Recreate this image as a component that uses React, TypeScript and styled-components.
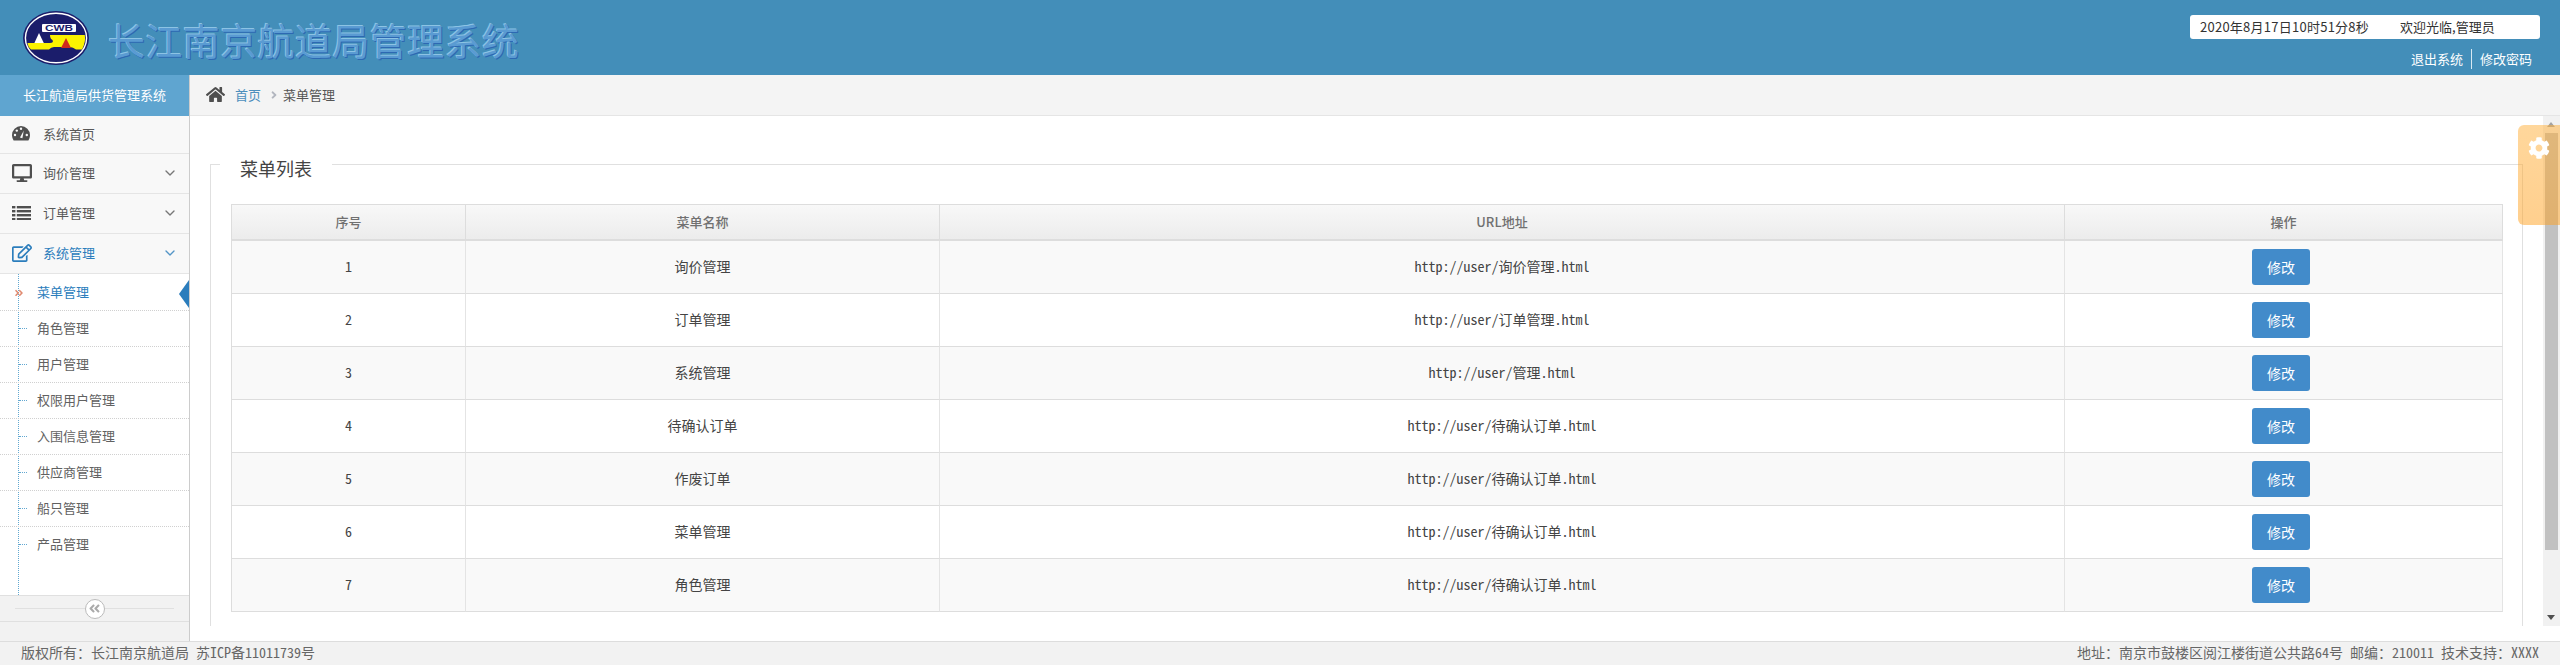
import * as React from 'react'
import styled, { createGlobalStyle } from 'styled-components'
import {
  FaAngleDoubleLeft,
  FaAngleDoubleRight,
  FaAngleRight,
  FaCog,
  FaDesktop,
  FaHome,
  FaRegEdit,
} from 'react-icons/fa'
import { ChevronDown } from 'lucide-react'

const sans = `"Noto Sans CJK SC", "Open Sans", sans-serif`
const song = `"Noto Sans Mono CJK SC", "Liberation Mono", "Noto Sans CJK SC", monospace`

const GlobalStyle = createGlobalStyle`
  html, body {
    margin: 0;
    height: 100%;
    overflow: hidden;
    background: #fff;
    font-family: ${sans};
    font-size: 13px;
  }
  * { box-sizing: border-box; }
`

const Page = styled.div`
  display: flex;
  flex-direction: column;
  height: 665px;
`

const Header = styled.header`
  flex: 0 0 75px;
  display: flex;
  justify-content: space-between;
  background: #438eb9;
  padding: 11px 20px 0 23px;
`

const BrandArea = styled.div`
  display: flex;
  align-items: flex-start;
  gap: 19px;
`

const SystemTitle = styled.h1`
  margin: 7px 0 0;
  font-size: 37px;
  line-height: 44px;
  font-weight: 400;
  letter-spacing: 0.4px;
  color: #5a9bd2;
  text-shadow: -1px -1px 0 #8cc3e4, 1px 1px 0 #2d68b2;
`

const HeaderRight = styled.div`
  display: flex;
  flex-direction: column;
  align-items: flex-end;
  padding-top: 4px;
`

const ClockBox = styled.div`
  display: flex;
  gap: 31px;
  width: 350px;
  height: 24px;
  padding-left: 10px;
  background: #fff;
  border-radius: 3px;
  color: #333;
  line-height: 24px;
`

const ClockDate = styled.span`
  letter-spacing: 0.25px;
`

const HeaderLinks = styled.div`
  display: flex;
  align-items: center;
  height: 20px;
  margin-top: 10px;
  padding-right: 8px;
  color: #fff;
`

const HeaderLink = styled.a<{ $divided?: boolean }>`
  line-height: 20px;
  padding-left: ${({ $divided }) => ($divided ? '8px' : '0')};
  margin-left: ${({ $divided }) => ($divided ? '8px' : '0')};
  border-left: ${({ $divided }) => ($divided ? '1px solid #d8e8f2' : 'none')};
`

const Body = styled.div`
  flex: 1;
  display: flex;
  min-height: 0;
`

const Sidebar = styled.aside`
  flex: 0 0 190px;
  display: flex;
  flex-direction: column;
  background: #f2f2f2;
  border-right: 1px solid #ccc;
`

const SideBrand = styled.div`
  flex: 0 0 41px;
  background: #5fa5d0;
  color: #fff;
  text-align: center;
  line-height: 39px;
`

const NavItem = styled.div<{ $active?: boolean; $height: number }>`
  flex: 0 0 ${({ $height }) => $height}px;
  display: flex;
  align-items: center;
  padding: 0 11px 2px 12px;
  background: #f8f8f8;
  border-bottom: 1px solid #e5e5e5;
  color: ${({ $active }) => ($active ? '#2b7dbc' : '#585858')};
`

const NavIcon = styled.span<{ $active?: boolean }>`
  flex: 0 0 31px;
  display: flex;
  align-items: center;
  font-size: 20px;
  color: ${({ $active }) => ($active ? '#2b7dbc' : '#4f4f4f')};
`

const NavLabel = styled.span`
  flex: 1;
`

const NavCaret = styled(ChevronDown)`
  width: 16px;
  height: 16px;
  stroke-width: 2;
  opacity: 0.8;
`

const SubList = styled.div`
  position: relative;
  flex: 1;
  padding-top: 1px;
  background: #fff;

  &::before {
    content: '';
    position: absolute;
    top: 0;
    bottom: 0;
    left: 18px;
    border-left: 1px dotted #62a8d1;
  }
`

const SubItem = styled.div<{ $active?: boolean; $last?: boolean }>`
  position: relative;
  height: 36px;
  padding-left: 37px;
  line-height: 33px;
  color: ${({ $active }) => ($active ? '#2b7dbc' : '#616161')};
  border-bottom: ${({ $last }) => ($last ? 'none' : '1px dotted #d0d0d0')};
`

const SubTick = styled.span`
  position: absolute;
  left: 19px;
  top: 17px;
  width: 8px;
  border-top: 1px dotted #62a8d1;
`

const SubMarker = styled(FaAngleDoubleRight)`
  position: absolute;
  left: 14px;
  top: 13px;
  font-size: 10px;
  color: #e08a70;
`

const ActiveArrow = styled.span`
  position: absolute;
  right: 0;
  top: 5px;
  width: 0;
  height: 0;
  border-style: solid;
  border-width: 14px 10px 14px 0;
  border-color: transparent #2b7dbc transparent transparent;
`

const CollapseBar = styled.div`
  position: relative;
  flex: 0 0 27px;
  margin-bottom: 19px;
  display: flex;
  align-items: center;
  justify-content: center;
  border-top: 1px solid #e0e0e0;
  border-bottom: 1px solid #e0e0e0;

  &::before {
    content: '';
    position: absolute;
    left: 15px;
    right: 15px;
    top: 12px;
    border-top: 1px solid #e0e0e0;
  }
`

const CollapseButton = styled.span`
  position: relative;
  width: 20px;
  height: 20px;
  display: flex;
  align-items: center;
  justify-content: center;
  border-radius: 50%;
  background: #fff;
  border: 1px solid #bbb;
  color: #aaa;
  font-size: 13px;
`

const Main = styled.main`
  flex: 1;
  min-width: 0;
  display: flex;
  flex-direction: column;
`

const Breadcrumb = styled.nav`
  flex: 0 0 41px;
  display: flex;
  align-items: center;
  padding: 0 0 2px 16px;
  background: #f4f4f4;
  border-bottom: 1px solid #e5e5e5;
  color: #555;
`

const HomeIcon = styled(FaHome)`
  font-size: 19px;
  color: #4f4f4f;
  margin-right: 10px;
`

const CrumbLink = styled.a`
  color: #4c8fbd;
`

const CrumbSep = styled(FaAngleRight)`
  font-size: 12px;
  color: #b2b6bf;
  margin: 2px 3px 0 7px;
`

const ContentRow = styled.div`
  flex: 1;
  min-height: 0;
  display: flex;
  margin-bottom: 15px;
`

const ScrollArea = styled.div`
  flex: 1;
  min-width: 0;
  overflow: hidden;
  padding: 32px 20px 0;
`

const Group = styled.fieldset`
  margin: 0;
  min-width: 0;
  padding: 24px 20px 40px;
  border: 1px solid #e0e0e0;
`

const GroupTitle = styled.legend`
  margin-left: -11px;
  padding: 8px 20px 0;
  font-size: 18px;
  line-height: 24px;
  color: #444;
`

const Table = styled.table`
  width: 2271px;
  table-layout: fixed;
  border-collapse: separate;
  border-spacing: 0;
  border-top: 1px solid #ddd;
  border-left: 1px solid #ddd;
  font-family: ${song};
  font-size: 14px;
  color: #444;
`

const HeadCell = styled.th<{ $width: number }>`
  width: ${({ $width }) => $width}px;
  height: 36px;
  padding: 0 0 2px;
  background: linear-gradient(#f8f8f8, #ececec);
  border-right: 1px solid #ddd;
  border-bottom: 2px solid #ddd;
  font-family: ${sans};
  font-size: 13px;
  font-weight: 500;
  color: #707070;
`

const Row = styled.tr<{ $striped: boolean }>`
  background: ${({ $striped }) => ($striped ? '#f9f9f9' : '#fff')};
`

const Cell = styled.td<{ $action?: boolean }>`
  height: 53px;
  padding: 0 0 ${({ $action }) => ($action ? 0 : 3)}px;
  text-align: center;
  border-right: 1px solid #e4e4e4;
  border-bottom: 1px solid #ddd;
`

const EditButton = styled.button`
  display: block;
  width: 58px;
  height: 36px;
  margin-left: 187px;
  padding: 0;
  border: 0;
  border-radius: 3px;
  background: #428bca;
  color: #fff;
  font-family: ${sans};
  font-size: 14px;
`

const ScrollTrack = styled.div`
  position: relative;
  flex: 0 0 17px;
  background: #f1f1f1;
`

const ScrollThumb = styled.div`
  position: absolute;
  left: 2px;
  right: 2px;
  top: 17px;
  height: 417px;
  background: #c1c1c1;
`

const ScrollArrow = styled.span<{ $down?: boolean }>`
  position: absolute;
  left: 4px;
  ${({ $down }) => ($down ? 'bottom: 6px;' : 'top: 6px;')}
  width: 0;
  height: 0;
  border-style: solid;
  border-width: ${({ $down }) => ($down ? '5px 4.5px 0' : '0 4.5px 5px')};
  border-color: ${({ $down }) =>
    $down
      ? '#505050 transparent transparent'
      : 'transparent transparent #a3a3a3'};
`

const SettingsTab = styled.div`
  position: absolute;
  top: 125px;
  right: 0;
  width: 42px;
  height: 100px;
  padding: 8px 0 0 10px;
  border-radius: 6px 0 0 6px;
  background: linear-gradient(rgba(255, 175, 57, 0.5), rgba(255, 160, 30, 0.5));
  color: #fff;
  font-size: 22px;
`

const Footer = styled.footer`
  flex: 0 0 24px;
  display: flex;
  justify-content: space-between;
  padding: 0 21px;
  background: #f2f2f2;
  border-top: 1px solid #ddd;
  font-family: ${song};
  font-size: 14px;
  line-height: 21px;
  color: #666;
  white-space: pre;
`

const Logo = () => (
  <svg width="66" height="54" viewBox="0 0 66 54">
    <ellipse cx="33" cy="27" rx="33" ry="27" fill="#1b1d6b" />
    <ellipse cx="33" cy="27" rx="30.6" ry="24.8" fill="none" stroke="#fff" strokeWidth="1.4" />
    <path
      d="M27 24 H61.8 Q63 31 59 38.5 H53 Q50 36 47 36 H31 Q28 36 26 38.5 H8 Q5 36 4.4 32 H27 Q31 32 29.5 29 Q27 28 27 24 Z"
      fill="#fbf200"
    />
    <polygon points="11.4,32 16,22 20.8,32" fill="#fff" />
    <polygon points="38,37 43,27 48,37" fill="#d0291c" />
    <rect x="19" y="13" width="34" height="8" rx="1" fill="#fff" />
    <text
      x="36"
      y="20.2"
      textAnchor="middle"
      textLength="28"
      lengthAdjust="spacingAndGlyphs"
      fontFamily="Liberation Sans, sans-serif"
      fontSize="9.5"
      fontWeight="700"
      fill="#1b1d6b"
    >
      CWB
    </text>
  </svg>
)

const GaugeIcon = () => (
  <svg width="18" height="15" viewBox="0 0 18 15">
    <path d="M9 0a9 9 0 0 1 9 9c0 2-.6 3.9-1.6 5.4H1.6A9 9 0 0 1 0 9a9 9 0 0 1 9-9z" fill="currentColor" />
    <g fill="#f8f8f8">
      <circle cx="3" cy="9" r="1.2" />
      <circle cx="4.8" cy="4.6" r="1.2" />
      <circle cx="9" cy="2.8" r="1.2" />
      <circle cx="14.8" cy="9" r="1.2" />
    </g>
    <path d="M8 11.5 L11.8 4.6 L10.4 12.2 Z" fill="#f8f8f8" />
  </svg>
)

const ListIcon = () => (
  <svg width="19" height="14" viewBox="0 0 19 14">
    {[0, 4, 8, 12].map((y) => (
      <g key={y} fill="currentColor">
        <rect x="0" y={y} width="3.4" height="2.4" />
        <rect x="4.8" y={y} width="14.2" height="2.4" />
      </g>
    ))}
  </svg>
)

const subItems = ['菜单管理', '角色管理', '用户管理', '权限用户管理', '入围信息管理', '供应商管理', '船只管理', '产品管理']

const menus = [
  { name: '询价管理', url: 'http://user/询价管理.html' },
  { name: '订单管理', url: 'http://user/订单管理.html' },
  { name: '系统管理', url: 'http://user/管理.html' },
  { name: '待确认订单', url: 'http://user/待确认订单.html' },
  { name: '作废订单', url: 'http://user/待确认订单.html' },
  { name: '菜单管理', url: 'http://user/待确认订单.html' },
  { name: '角色管理', url: 'http://user/待确认订单.html' },
]

export default function App() {
  return (
    <Page>
      <GlobalStyle />
      <Header>
        <BrandArea>
          <Logo />
          <SystemTitle>长江南京航道局管理系统</SystemTitle>
        </BrandArea>
        <HeaderRight>
          <ClockBox>
            <ClockDate>2020年8月17日10时51分8秒</ClockDate>
            <span>欢迎光临,管理员</span>
          </ClockBox>
          <HeaderLinks>
            <HeaderLink>退出系统</HeaderLink>
            <HeaderLink $divided>修改密码</HeaderLink>
          </HeaderLinks>
        </HeaderRight>
      </Header>
      <Body>
        <Sidebar>
          <SideBrand>长江航道局供货管理系统</SideBrand>
          <NavItem $height={38}>
            <NavIcon><GaugeIcon /></NavIcon>
            <NavLabel>系统首页</NavLabel>
          </NavItem>
          <NavItem $height={40}>
            <NavIcon><FaDesktop /></NavIcon>
            <NavLabel>询价管理</NavLabel>
            <NavCaret />
          </NavItem>
          <NavItem $height={40}>
            <NavIcon><ListIcon /></NavIcon>
            <NavLabel>订单管理</NavLabel>
            <NavCaret />
          </NavItem>
          <NavItem $height={40} $active>
            <NavIcon $active><FaRegEdit /></NavIcon>
            <NavLabel>系统管理</NavLabel>
            <NavCaret />
          </NavItem>
          <SubList>
            {subItems.map((item, i) => (
              <SubItem key={item} $active={i === 0} $last={i === subItems.length - 1}>
                {i === 0 ? <SubMarker /> : <SubTick />}
                {item}
                {i === 0 && <ActiveArrow />}
              </SubItem>
            ))}
          </SubList>
          <CollapseBar>
            <CollapseButton><FaAngleDoubleLeft /></CollapseButton>
          </CollapseBar>
        </Sidebar>
        <Main>
          <Breadcrumb>
            <HomeIcon />
            <CrumbLink>首页</CrumbLink>
            <CrumbSep />
            <span>菜单管理</span>
          </Breadcrumb>
          <ContentRow>
            <ScrollArea>
              <Group>
                <GroupTitle>菜单列表</GroupTitle>
                <Table>
                  <thead>
                    <tr>
                      <HeadCell $width={234}>序号</HeadCell>
                      <HeadCell $width={474}>菜单名称</HeadCell>
                      <HeadCell $width={1125}>URL地址</HeadCell>
                      <HeadCell $width={438}>操作</HeadCell>
                    </tr>
                  </thead>
                  <tbody>
                    {menus.map((menu, i) => (
                      <Row key={i} $striped={i % 2 === 0}>
                        <Cell>{i + 1}</Cell>
                        <Cell>{menu.name}</Cell>
                        <Cell>{menu.url}</Cell>
                        <Cell $action><EditButton>修改</EditButton></Cell>
                      </Row>
                    ))}
                  </tbody>
                </Table>
              </Group>
            </ScrollArea>
            <ScrollTrack>
              <ScrollArrow />
              <ScrollThumb />
              <ScrollArrow $down />
            </ScrollTrack>
          </ContentRow>
        </Main>
      </Body>
      <Footer>
        <span>{'版权所有\uFF1A长江南京航道局 苏ICP备11011739号'}</span>
        <span>{'地址\uFF1A南京市鼓楼区阅江楼街道公共路64号 邮编\uFF1A210011 技术支持\uFF1AXXXX'}</span>
      </Footer>
      <SettingsTab><FaCog /></SettingsTab>
    </Page>
  )
}
